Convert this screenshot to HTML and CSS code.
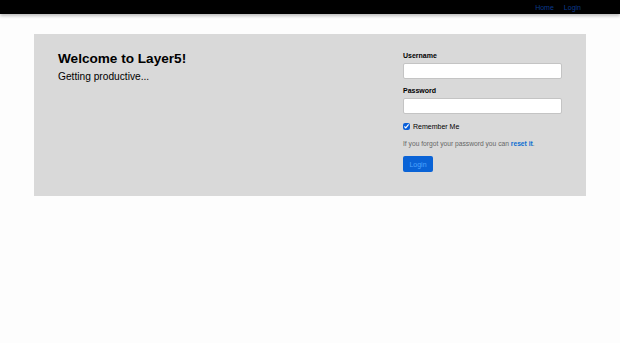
FILE: index.html
```html
<!DOCTYPE html>
<html lang="en">
<head>
    <meta charset="UTF-8">
    <meta name="viewport" content="width=device-width, initial-scale=1.0">
    <title>Layer5</title>
    <link rel="stylesheet" href="styles.css">
</head>
<body>
    <!-- top bar -->
    <div class="navbar">
        <a href="#" class="nav-link">Home</a>
        <a href="#" class="nav-link">Login</a>
    </div>

    <!-- main panel -->
    <div class="jumbo">
        <div class="intro">
            <h1>Welcome to Layer5!</h1>
            <p class="lead">Getting productive...</p>
        </div>

        <form class="login-form">
            <label class="field-label" for="username">Username</label>
            <input type="text" id="username" class="field-input">

            <label class="field-label" for="password">Password</label>
            <input type="password" id="password" class="field-input">

            <label class="remember">
                <input type="checkbox" checked>
                <span>Remember Me</span>
            </label>

            <p class="help">If you forgot your password you can <a href="#">reset it</a>.</p>

            <button type="button" class="btn-login">Login</button>
        </form>
    </div>
</body>
</html>
```

FILE: styles.css
```css
/* layout */
body {
    margin: 0;
    font-family: "Liberation Sans", Arial, sans-serif;
    background-color: #fdfdfd;
    color: #111;
}

/* top bar */
.navbar {
    height: 14px;
    background-color: #000;
    display: flex;
    justify-content: flex-end;
    align-items: center;
    gap: 10px;
    padding-right: 39px;
    box-shadow: 0 2px 3px rgba(0, 0, 0, 0.25);
}

.nav-link {
    font-size: 7px;
    color: #0b3b8c;
    text-decoration: none;
}

/* panel */
.jumbo {
    margin: 20px 34px 0;
    height: 162px;
    background-color: #d9d9d9;
    display: flex;
    justify-content: space-between;
    box-sizing: border-box;
    padding: 14px 24px 0 24px;
}

h1 {
    font-size: 13.6px;
    margin: 2px 0 0;
    line-height: 18px;
    color: #000;
}

.lead {
    font-size: 10.2px;
    margin: 2px 0 0;
    line-height: 14px;
    color: #000;
}

/* login form */
.login-form {
    width: 159px;
    display: flex;
    flex-direction: column;
    padding-top: 3px;
}

.field-label {
    font-size: 7px;
    font-weight: bold;
    line-height: 9px;
    margin-bottom: 3px;
    color: #000;
}

.field-input {
    height: 16px;
    margin: 0 0 7px;
    border: 1px solid #c4c4c4;
    border-radius: 2px;
    background-color: #fff;
    box-sizing: border-box;
    padding: 0 4px;
}

.remember {
    display: flex;
    align-items: center;
    gap: 3px;
    font-size: 7px;
    line-height: 9px;
    margin-top: 1px;
    color: #000;
    font-weight: 500;
}

.remember input {
    margin: 0;
    width: 7px;
    height: 7px;
    accent-color: #0a5fd8;
}

.help {
    font-size: 6.7px;
    line-height: 9px;
    color: #666;
    margin: 8px 0 0;
}

.help a {
    color: #0a6ed1;
    font-weight: bold;
    text-decoration: none;
}

.btn-login {
    margin-top: 8px;
    width: 30px;
    height: 16px;
    padding: 0;
    border: none;
    border-radius: 2px;
    background-color: #0a63d6;
    color: #4fa3ff;
    font-family: inherit;
    font-size: 7px;
}
```
